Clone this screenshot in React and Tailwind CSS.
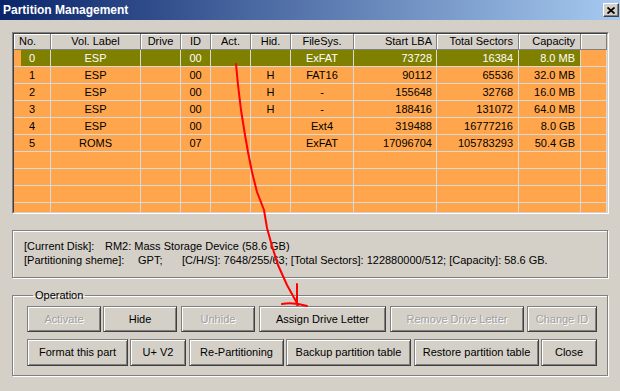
import React from "react"

const cols = [
  { w: "w-[37px]", label: "No.", head: "justify-start pl-[5px]", cell: "justify-center" },
  { w: "w-[90px]", label: "Vol. Label", head: "justify-center", cell: "justify-center" },
  { w: "w-[40px]", label: "Drive", head: "justify-center", cell: "justify-center" },
  { w: "w-[30px]", label: "ID", head: "justify-center", cell: "justify-center" },
  { w: "w-[40px]", label: "Act.", head: "justify-center", cell: "justify-center" },
  { w: "w-[40px]", label: "Hid.", head: "justify-center", cell: "justify-center" },
  { w: "w-[63px]", label: "FileSys.", head: "justify-center", cell: "justify-center" },
  { w: "w-[83px]", label: "Start LBA", head: "justify-end pr-[4px]", cell: "justify-end pr-[4px]" },
  { w: "w-[82px]", label: "Total Sectors", head: "justify-end pr-[5px]", cell: "justify-end pr-[5px]" },
  { w: "w-[62px]", label: "Capacity", head: "justify-end pr-[5px]", cell: "justify-end pr-[5px]" },
  { w: "w-[26px]", label: "", head: "", cell: "" },
]

const rows = [
  ["0", "ESP", "", "00", "", "", "ExFAT", "73728", "16384", "8.0 MB", ""],
  ["1", "ESP", "", "00", "", "H", "FAT16", "90112", "65536", "32.0 MB", ""],
  ["2", "ESP", "", "00", "", "H", "-", "155648", "32768", "16.0 MB", ""],
  ["3", "ESP", "", "00", "", "H", "-", "188416", "131072", "64.0 MB", ""],
  ["4", "ESP", "", "00", "", "", "Ext4", "319488", "16777216", "8.0 GB", ""],
  ["5", "ROMS", "", "07", "", "", "ExFAT", "17096704", "105783293", "50.4 GB", ""],
  ["", "", "", "", "", "", "", "", "", "", ""],
  ["", "", "", "", "", "", "", "", "", "", ""],
  ["", "", "", "", "", "", "", "", "", "", ""],
  ["", "", "", "", "", "", "", "", "", "", ""],
]

function Btn({ className = "", disabled, children }) {
  return (
    <button
      className={
        "flex items-center justify-center border border-t-[#808080] border-l-[#808080] border-b-[#404040] border-r-[#404040] bg-[#d4d0c8] text-[11px] shadow-[inset_1px_1px_0_#ffffff,inset_-1px_-1px_0_#808080] " +
        (disabled ? "text-[#a0a0a0] [text-shadow:1px_1px_0_#ffffff] " : "text-black ") +
        className
      }
    >
      {children}
    </button>
  )
}

export default function App() {
  return (
    <div className="relative w-[620px] h-[391px] overflow-hidden bg-[#d4d0c8] font-['Liberation_Sans',Arial,sans-serif] text-[11px] text-black">
      {/* Title bar */}
      <div className="h-[20px] flex items-center justify-between pl-[3px] pr-[1px] bg-[linear-gradient(to_right,#0a246a,#a6caf0)]">
        <span className="text-white font-bold text-[12px] leading-none">Partition Management</span>
        <div className="w-[16px] h-[14px] flex items-center justify-center bg-[#d4d0c8] border border-t-white border-l-white border-b-[#404040] border-r-[#404040] shadow-[inset_-1px_-1px_0_#808080]">
          <svg width="8" height="7" viewBox="0 0 8 7">
            <path d="M0.5 0.5 L7.5 6.5 M7.5 0.5 L0.5 6.5" stroke="#000" strokeWidth="1.8" />
          </svg>
        </div>
      </div>

      <div className="px-[12px]">
        {/* Partition list */}
        <div className="mt-[12px] w-[597px] h-[182px] border border-t-[#808080] border-l-[#808080] border-b-white border-r-white">
          <div className="h-full overflow-hidden border border-t-[#404040] border-l-[#404040] border-b-[#d4d0c8] border-r-[#d4d0c8] bg-[#ffa64d]">
            <div className="flex bg-[#d4d0c8]">
              {cols.map((c, i) => (
                <div
                  key={i}
                  className={`${c.w} ${c.head} h-[16px] flex items-center shrink-0 border-r border-b border-[#808080] shadow-[inset_1px_1px_0_#ffffff] leading-none`}
                >
                  {c.label}
                </div>
              ))}
            </div>
            {rows.map((r, ri) => (
              <div key={ri} className="flex">
                {r.map((v, ci) => {
                  const sel = ri === 0 && ci < 10
                  return (
                    <div
                      key={ci}
                      className={`${cols[ci].w} ${cols[ci].cell} h-[17px] flex items-center shrink-0 border-r border-b border-[#d9d9d9] leading-none ${
                        sel ? "text-white" : "text-black"
                      } ${
                        sel && ci === 0
                          ? "bg-[linear-gradient(to_right,#ffa64d_7px,#808000_7px)]"
                          : sel
                          ? "bg-[#808000]"
                          : ""
                      }`}
                    >
                      {v}
                    </div>
                  )
                })}
              </div>
            ))}
          </div>
        </div>

        {/* Disk info */}
        <div className="mt-[16px] w-[596px] h-[48px] border border-[#808080] shadow-[inset_1px_1px_0_#ffffff,1px_1px_0_#ffffff] pl-[11px] pt-[8px] leading-[14px]">
          <div className="flex whitespace-pre">
            <span className="w-[81px]">[Current Disk]:</span>
            <span>RM2: Mass Storage Device (58.6 GB)</span>
          </div>
          <div className="flex whitespace-pre">
            <span className="w-[114px]">[Partitioning sheme]:</span>
            <span className="w-[44px]">GPT;</span>
            <span>[C/H/S]: 7648/255/63; [Total Sectors]: 122880000/512; [Capacity]: 58.6 GB.</span>
          </div>
        </div>

        {/* Operation */}
        <fieldset className="mt-[11px] w-[596px] border border-[#808080] shadow-[inset_1px_1px_0_#ffffff,1px_1px_0_#ffffff] pl-[14px] pt-[4px] pb-[9px]">
          <legend className="ml-[6px] px-[2px] leading-[13px]">Operation</legend>
          <div className="flex h-[26px]">
            <Btn disabled className="w-[74px]">Activate</Btn>
            <Btn className="w-[74px] ml-[2px]">Hide</Btn>
            <Btn disabled className="w-[74px] ml-[4px]">Unhide</Btn>
            <Btn className="w-[127px] ml-[4px]">Assign Drive Letter</Btn>
            <Btn disabled className="w-[134px] ml-[4px]">Remove Drive Letter</Btn>
            <Btn disabled className="w-[70px] ml-[3px]">Change ID</Btn>
          </div>
          <div className="flex h-[27px] mt-[7px]">
            <Btn className="w-[101px]">Format this part</Btn>
            <Btn className="w-[56px] ml-[2px]">U+ V2</Btn>
            <Btn className="w-[95px] ml-[3px]">Re-Partitioning</Btn>
            <Btn className="w-[125px] ml-[2px]">Backup partition table</Btn>
            <Btn className="w-[125px] ml-[3px]">Restore partition table</Btn>
            <Btn className="w-[56px] ml-[2px]">Close</Btn>
          </div>
        </fieldset>
      </div>

      {/* Hand-drawn annotation */}
      <svg className="absolute inset-0 pointer-events-none" width="620" height="391" viewBox="0 0 620 391">
        <path
          d="M236 64 L238 85 L241 110 L245 135 L248 152 L252 172 L257 192 L264 210 L267 228 L272 246 L278 265 L287 285 L298 305"
          fill="none"
          stroke="#ff0000"
          strokeWidth="2"
          strokeLinecap="round"
          strokeLinejoin="round"
        />
        <path d="M297 284 L297 305 M282 304 Q294 302 307 306" fill="none" stroke="#ff0000" strokeWidth="2" strokeLinecap="round" />
      </svg>
    </div>
  )
}
